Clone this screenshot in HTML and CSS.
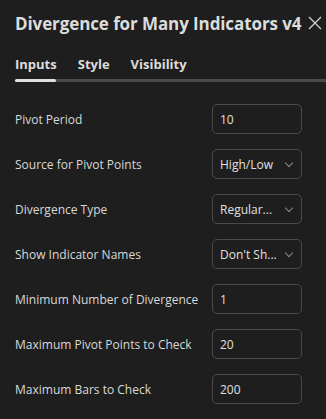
FILE: index.html
```html
<!DOCTYPE html>
<html lang="en">
<head>
    <meta charset="UTF-8">
    <meta name="viewport" content="width=device-width, initial-scale=1.0">
    <title>Divergence for Many Indicators v4</title>
    <link rel="stylesheet" href="styles.css">
</head>
<body>
    <header class="dialog-header">
        <h1 class="dialog-title">Divergence for Many Indicators v4</h1>
        <button class="close-btn" aria-label="Close">
            <svg width="14" height="14" viewBox="0 0 14 14"><path d="M1 1L13 13M13 1L1 13" stroke="#d6d6d6" stroke-width="1.2" fill="none"/></svg>
        </button>
    </header>

    <nav class="tabs">
        <span class="tab active">Inputs</span>
        <span class="tab">Style</span>
        <span class="tab">Visibility</span>
    </nav>
    <div class="tab-track"><div class="tab-indicator"></div></div>

    <!-- Inputs -->
    <div class="settings">
        <div class="row">
            <label>Pivot Period</label>
            <div class="field">10</div>
        </div>
        <div class="row">
            <label>Source for Pivot Points</label>
            <div class="field select">High/Low<span class="chev"></span></div>
        </div>
        <div class="row">
            <label>Divergence Type</label>
            <div class="field select">Regular...<span class="chev"></span></div>
        </div>
        <div class="row">
            <label>Show Indicator Names</label>
            <div class="field select">Don't Sh...<span class="chev"></span></div>
        </div>
        <div class="row">
            <label>Minimum Number of Divergence</label>
            <div class="field">1</div>
        </div>
        <div class="row">
            <label>Maximum Pivot Points to Check</label>
            <div class="field">20</div>
        </div>
        <div class="row">
            <label>Maximum Bars to Check</label>
            <div class="field">200</div>
        </div>
    </div>
</body>
</html>
```
FILE: styles.css
```css
body {
    font-family: 'Open Sans', 'Noto Sans', sans-serif;
    background-color: #1e1e1e;
    color: #d9d9d9;
    margin: 0;
    padding: 0;
    overflow: hidden;
}
.dialog-header {
    display: flex;
    align-items: center;
    justify-content: space-between;
    height: 46px;
    padding: 0 3px 0 15px;
}
.dialog-title {
    margin: 0;
    font-size: 17px;
    font-weight: 700;
    color: #dcdcdc;
    white-space: nowrap;
    letter-spacing: -0.1px;
}
.close-btn {
    background: none;
    border: none;
    padding: 0;
    width: 16px;
    height: 16px;
    display: flex;
    align-items: center;
    justify-content: center;
}
.tabs {
    display: flex;
    gap: 21px;
    padding: 9px 15px 0;
    height: 24px;
}
.tab {
    font-size: 13px;
    font-weight: 700;
    color: #dcdcdc;
}
.tab-track {
    height: 3px;
    margin: 0 0 0 15px;
    background-color: #4a4a4a;
    border-radius: 2px 0 0 2px;
}
.tab-indicator {
    width: 41px;
    height: 3px;
    background-color: #e0e0e0;
    border-radius: 2px;
}
.settings {
    display: flex;
    flex-direction: column;
    gap: 15px;
    padding: 22px 24px 0 15px;
}
.row {
    display: flex;
    align-items: center;
    justify-content: space-between;
    height: 30px;
}
.row label {
    font-size: 12px;
    color: #d9d9d9;
}
.field {
    box-sizing: border-box;
    width: 90px;
    height: 30px;
    border: 1px solid #4a4a4a;
    border-radius: 5px;
    padding: 0 7px;
    display: flex;
    align-items: center;
    font-size: 12px;
    color: #e0e0e0;
}
.select {
    justify-content: space-between;
}
.chev {
    width: 5px;
    height: 5px;
    border-right: 1px solid #8a8a8a;
    border-bottom: 1px solid #8a8a8a;
    transform: rotate(45deg);
    margin: -3px 2px 0 0;
}
```
